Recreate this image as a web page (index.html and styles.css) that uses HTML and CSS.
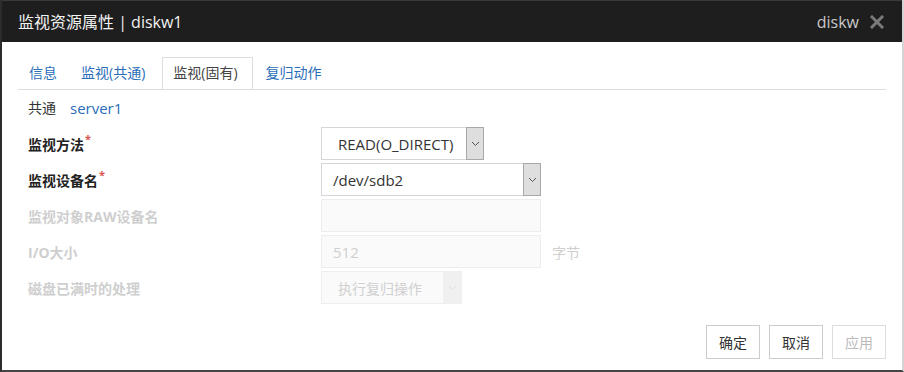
FILE: index.html
```html
<!DOCTYPE html>
<html lang="zh">
<head>
<meta charset="utf-8">
<title>监视资源属性</title>
<link rel="stylesheet" href="styles.css">
</head>
<body>
<div class="dialog">
  <div class="header">
    <div class="title">监视资源属性 | diskw1</div>
    <div class="header-right">
      <span class="type">diskw</span>
      <svg class="close" width="14" height="14" viewBox="0 0 14 14"><path d="M2 2 L12 12 M12 2 L2 12" stroke="#7a7a7a" stroke-width="3" stroke-linecap="square"/></svg>
    </div>
  </div>
  <div class="body">
    <div class="tabs">
      <div class="tab">信息</div>
      <div class="tab wide">监视(共通)</div>
      <div class="tab wide active">监视(固有)</div>
      <div class="tab">复归动作</div>
    </div>
    <div class="server"><span class="common">共通</span><span class="srv">server1</span></div>
    <div class="form">
      <div class="label req">监视方法<span class="star">*</span></div>
      <div class="field">
        <div class="select s1"><span class="val pad">READ(O_DIRECT)</span><span class="arrow"><svg width="9" height="6" viewBox="0 0 9 6"><path d="M1 1 L4.5 4.5 L8 1" fill="none" stroke="#555" stroke-width="1"/></svg></span></div>
      </div>
      <div class="label req">监视设备名<span class="star">*</span></div>
      <div class="field">
        <div class="select s2"><span class="val">/dev/sdb2</span><span class="arrow"><svg width="9" height="6" viewBox="0 0 9 6"><path d="M1 1 L4.5 4.5 L8 1" fill="none" stroke="#555" stroke-width="1"/></svg></span></div>
      </div>
      <div class="label dis">监视对象RAW设备名</div>
      <div class="field">
        <div class="input"></div>
      </div>
      <div class="label dis">I/O大小</div>
      <div class="field">
        <div class="input"><span class="val">512</span></div>
        <span class="unit">字节</span>
      </div>
      <div class="label dis">磁盘已满时的处理</div>
      <div class="field">
        <div class="select s3 disabled"><span class="val pad">执行复归操作</span><span class="arrow"><svg width="9" height="6" viewBox="0 0 9 6"><path d="M1 1 L4.5 4.5 L8 1" fill="none" stroke="#ddd" stroke-width="1"/></svg></span></div>
      </div>
    </div>
    <div class="buttons">
      <div class="btn">确定</div>
      <div class="btn">取消</div>
      <div class="btn off">应用</div>
    </div>
  </div>
</div>
</body>
</html>
```
FILE: styles.css
```css
html, body {
  margin: 0;
  padding: 0;
  background: #fff;
}
body {
  font-family: "Open Sans", "Noto Sans CJK SC", sans-serif;
  font-size: 14px;
  color: #333;
}
.dialog {
  width: 904px;
  height: 372px;
  box-sizing: border-box;
  border-left: 2px solid #2c2c2c;
  border-right: 2px solid #d4d4d4;
  border-bottom: 2px solid #444;
  display: flex;
  flex-direction: column;
}
.header {
  height: 42px;
  background: #1e1e1e;
  border-top: 1px solid #3a3a3a;
  box-sizing: border-box;
  display: flex;
  align-items: center;
  justify-content: space-between;
  padding: 0 18px 0 16px;
  color: #f2f2f2;
}
.title {
  font-size: 16px;
  line-height: 20px;
}
.header-right {
  display: flex;
  align-items: center;
  gap: 11px;
}
.type {
  font-size: 16px;
  color: #c8c8c8;
}
.close { display: block; }
.body {
  flex: 1;
  padding: 15px 16px 0 16px;
  display: flex;
  flex-direction: column;
}
.tabs {
  display: flex;
  border-bottom: 1px solid #ddd;
  height: 32px;
}
.tab {
  padding: 0 10px;
  margin-right: 2px;
  line-height: 30px;
  border: 1px solid transparent;
  border-bottom: none;
  color: #2a6eb8;
}
.tab.wide { padding-right: 14px; }
.tab.active {
  border-color: #ddd;
  background: #fff;
  color: #444;
  height: 32px;
  box-sizing: border-box;
  margin-bottom: -1px;
}
.server {
  margin: 8px 0 0 10px;
  line-height: 20px;
  display: flex;
  gap: 14px;
}
.common { color: #333; }
.srv { color: #2a6eb8; font-size: 15px; }
.form {
  margin-top: 9px;
  display: grid;
  grid-template-columns: 293px 1fr;
  grid-auto-rows: 33px;
  row-gap: 3px;
  padding-left: 10px;
}
.label {
  display: flex;
  align-items: center;
  font-weight: bold;
}
.label.req { color: #222; }
.label.dis { color: #cfcfcf; }
.star {
  color: #d9534f;
  font-size: 11px;
  align-self: flex-start;
  margin-top: 4px;
  margin-left: 1px;
}
.field {
  display: flex;
  align-items: center;
  gap: 11px;
}
.select, .input {
  height: 33px;
  box-sizing: border-box;
  border: 1px solid #d6d6d6;
  display: flex;
  align-items: center;
  font-size: 15px;
  color: #333;
}
.val { padding-left: 11px; flex: 1; }
.val.pad { padding-left: 16px; }
.s3 .val { font-size: 14px; }
.arrow {
  align-self: stretch;
  width: 16px;
  margin: -1px -1px -1px 0;
  background: #dedede;
  border: 1px solid #a8a8a8;
  display: flex;
  align-items: center;
  justify-content: center;
}
.s1 { width: 163px; }
.s2 { width: 220px; }
.s3 { width: 141px; }
.s3 .arrow { background: #f0f0f0; border-color: #f0f0f0; width: 17px; }
.select.disabled { background: #fafafa; border-color: #eee; color: #d0d0d0; }
.input {
  width: 220px;
  background: #fafafa;
  border-color: #ededed;
  color: #cfcfcf;
}
.unit { color: #cfcfcf; }
.buttons {
  margin-top: auto;
  margin-bottom: 11px;
  display: flex;
  justify-content: flex-end;
  gap: 9px;
}
.btn {
  width: 54px;
  height: 34px;
  box-sizing: border-box;
  border: 1px solid #ccc;
  display: flex;
  align-items: center;
  justify-content: center;
  color: #333;
}
.btn.off { color: #bbb; border-color: #ddd; }
```
